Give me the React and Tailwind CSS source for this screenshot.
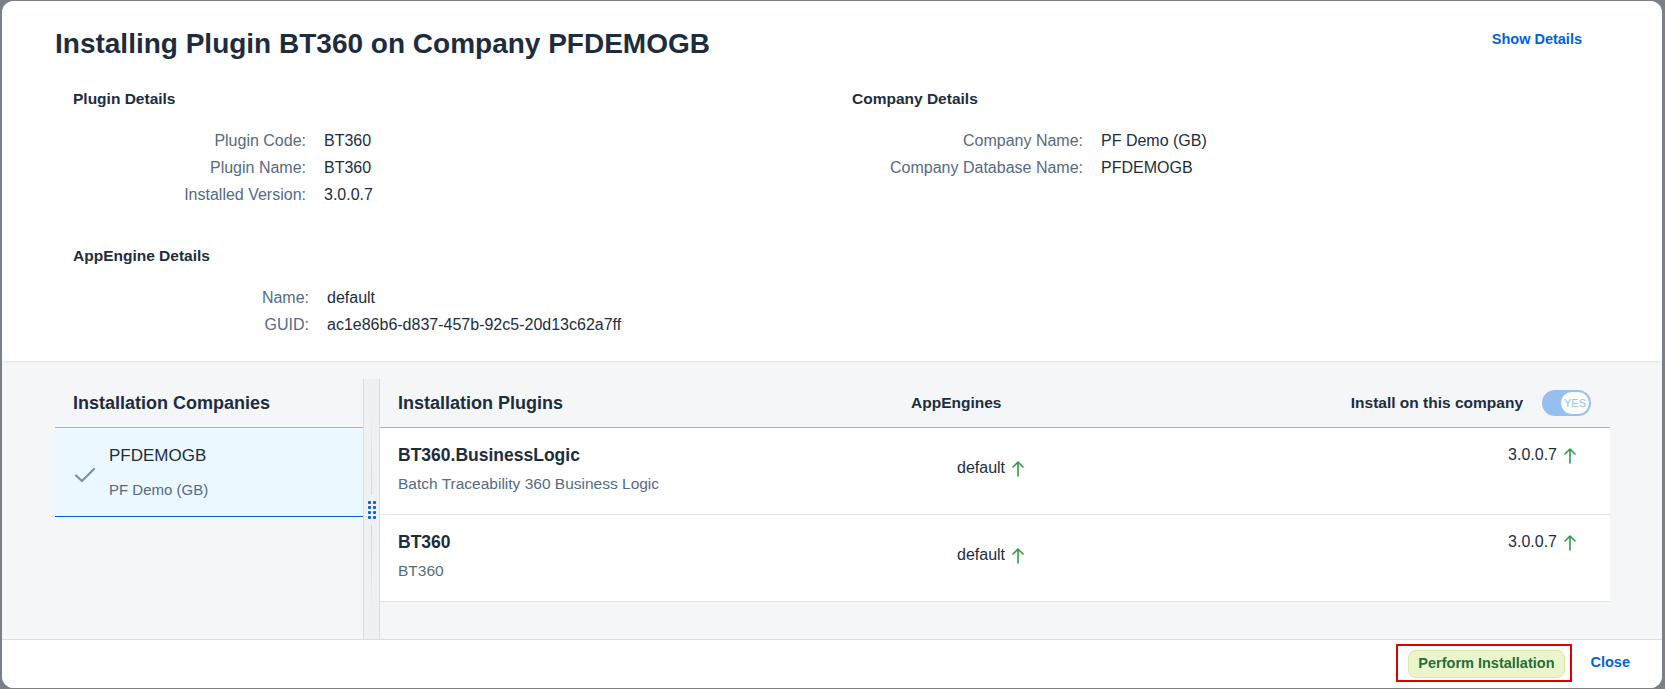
import React from "react";

const ArrowUp = () => (
  <svg width="12" height="17" viewBox="0 0 12 17" className="inline-block" fill="none">
    <path d="M6 16V2M1 7L6 2L11 7" stroke="#2f9a48" strokeWidth="1.6" strokeLinecap="round" strokeLinejoin="round" />
  </svg>
);

const Check = () => (
  <svg width="22" height="16" viewBox="0 0 22 16" fill="none">
    <path d="M2 8.5L8 14L20 2" stroke="#7d8fa3" strokeWidth="2.2" strokeLinecap="round" strokeLinejoin="round" />
  </svg>
);

function FormRow({ label, value, labelW }) {
  return (
    <div className="flex h-[27px] items-center">
      <div className={`${labelW} shrink-0 text-right text-[#556b82]`}>{label}</div>
      <div className="pl-[18px] text-[#1d2d3e]">{value}</div>
    </div>
  );
}

function Grip() {
  const dots = [0, 1, 2, 3, 4, 5, 6, 7];
  return (
    <div className="grid grid-cols-2 gap-x-[2px] gap-y-[2px]">
      {dots.map((d) => (
        <div key={d} className="h-[3px] w-[3px] rounded-[1px] bg-[#0064d9]" />
      ))}
    </div>
  );
}

export default function App() {
  return (
    <div
      className="h-[689px] w-[1665px] overflow-hidden bg-[#7a8088] pb-[1px] pl-[2px] pr-[3px] pt-[1px]"
      style={{ fontFamily: '"Liberation Sans", Arial, sans-serif' }}
    >
      <div className="flex h-full w-full flex-col overflow-hidden rounded-[12px] bg-white">
        {/* Top details */}
        <div className="relative z-10 shrink-0 bg-white pb-[23px] pl-[53px] pr-[80px] pt-[26px] shadow-[0_1px_2px_rgba(0,0,0,0.08)]">
          <div className="flex items-start justify-between">
            <h1 className="text-[28px] font-bold leading-[34px] text-[#1d2d3e]">
              Installing Plugin BT360 on Company PFDEMOGB
            </h1>
            <a className="mt-[2px] text-[14.5px] font-bold leading-[20px] text-[#0064d9]">Show Details</a>
          </div>

          <div className="grid grid-cols-[779px_1fr] pl-[18px] text-[16px]">
            <div>
              <div className="mt-[28px] h-[20px] text-[15.5px] font-bold leading-[20px] text-[#1d2d3e]">Plugin Details</div>
              <div className="mt-[18px]">
                <FormRow label="Plugin Code:" value="BT360" labelW="w-[233px]" />
                <FormRow label="Plugin Name:" value="BT360" labelW="w-[233px]" />
                <FormRow label="Installed Version:" value="3.0.0.7" labelW="w-[233px]" />
              </div>
            </div>
            <div>
              <div className="mt-[28px] h-[20px] text-[15.5px] font-bold leading-[20px] text-[#1d2d3e]">Company Details</div>
              <div className="mt-[18px]">
                <FormRow label="Company Name:" value="PF Demo (GB)" labelW="w-[231px]" />
                <FormRow label="Company Database Name:" value="PFDEMOGB" labelW="w-[231px]" />
              </div>
            </div>
          </div>

          <div className="pl-[18px] text-[16px]">
            <div className="mt-[38px] h-[20px] text-[15.5px] font-bold leading-[20px] text-[#1d2d3e]">AppEngine Details</div>
            <div className="mt-[18px]">
              <FormRow label="Name:" value="default" labelW="w-[236px]" />
              <FormRow label="GUID:" value="ac1e86b6-d837-457b-92c5-20d13c62a7ff" labelW="w-[236px]" />
            </div>
          </div>
        </div>

        {/* Gray working area */}
        <div className="flex min-h-0 flex-1 bg-[#f5f6f7] pl-[53px] pr-[52px] pt-[18px]">
          {/* Left panel */}
          <div className="w-[308px] shrink-0">
            <div className="flex h-[49px] items-center border-b border-[#a9b4be] pl-[18px] text-[18px] font-bold text-[#1d2d3e]">
              Installation Companies
            </div>
            <div className="flex h-[89px] items-center border-b-[1.5px] border-[#0064d9] bg-[#ebf8ff]">
              <div className="flex w-[54px] justify-center pl-[6px] pt-[6px]">
                <Check />
              </div>
              <div className="flex flex-col">
                <div className="text-[17px] leading-[22px] text-[#1d2d3e]">PFDEMOGB</div>
                <div className="mt-[13px] text-[15px] leading-[20px] text-[#556b82]">PF Demo (GB)</div>
              </div>
            </div>
          </div>

          {/* Splitter */}
          <div className="flex w-[17px] shrink-0 flex-col items-center border-l border-r border-[#d9dee2] bg-[#eef0f2]">
            <div className="mt-[30px] h-[86px] w-px bg-gradient-to-b from-transparent to-[#cfd5da]" />
            <div className="my-[6px]">
              <Grip />
            </div>
            <div className="h-[92px] w-px bg-gradient-to-b from-[#cfd5da] to-transparent" />
          </div>

          {/* Right panel */}
          <div className="flex min-w-0 flex-1 flex-col">
            <div className="flex h-[49px] items-center border-b border-[#a9b4be] pl-[18px] pr-[19px]">
              <div className="w-[513px] text-[18px] font-bold text-[#1d2d3e]">Installation Plugins</div>
              <div className="text-[15.5px] font-bold text-[#1d2d3e]">AppEngines</div>
              <div className="ml-auto flex items-center gap-[19px]">
                <div className="text-[15.5px] font-bold text-[#1d2d3e]">Install on this company</div>
                <div className="flex h-[26px] w-[49px] items-center justify-end rounded-full bg-[#94bff0] pr-[1px]">
                  <div className="flex h-[24px] w-[30px] items-center justify-center rounded-full border border-[#94bff0] bg-white text-[11px] leading-none text-[#94bff0]">
                    YES
                  </div>
                </div>
              </div>
            </div>

            {[
              { t: "BT360.BusinessLogic", s: "Batch Traceability 360 Business Logic" },
              { t: "BT360", s: "BT360" },
            ].map((r) => (
              <div key={r.t} className="flex h-[87px] border-b border-[#e5e5e5] bg-white pl-[18px] pr-[34px]">
                <div className="w-[559px] shrink-0 pt-[16px]">
                  <div className="text-[17.5px] font-bold leading-[22px] text-[#1d2d3e]">{r.t}</div>
                  <div className="mt-[8px] text-[15.5px] leading-[20px] text-[#556b82]">{r.s}</div>
                </div>
                <div className="flex items-center gap-[7px] self-center pb-[6px] text-[16px] text-[#1d2d3e]">
                  default <ArrowUp />
                </div>
                <div className="ml-auto flex items-center gap-[7px] self-start pt-[16px] text-[16px] leading-[22px] text-[#1d2d3e]">
                  3.0.0.7 <ArrowUp />
                </div>
              </div>
            ))}
          </div>
        </div>

        {/* Footer */}
        <div className="flex h-[49px] shrink-0 items-center justify-end border-t border-[#d9dee2] bg-white pb-[3px] pr-[32px]">
          <div className="mr-[19px] border-2 border-[#e00000] pb-[2px] pl-[10px] pr-[5px] pt-[4px]">
            <button className="h-[28px] rounded-[8px] border border-[#d7eaa9] bg-[#ebf5cb] px-[9px] text-[14.5px] font-bold text-[#256f3a]">
              Perform Installation
            </button>
          </div>
          <a className="text-[14.5px] font-bold text-[#0064d9]">Close</a>
        </div>
      </div>
    </div>
  );
}
